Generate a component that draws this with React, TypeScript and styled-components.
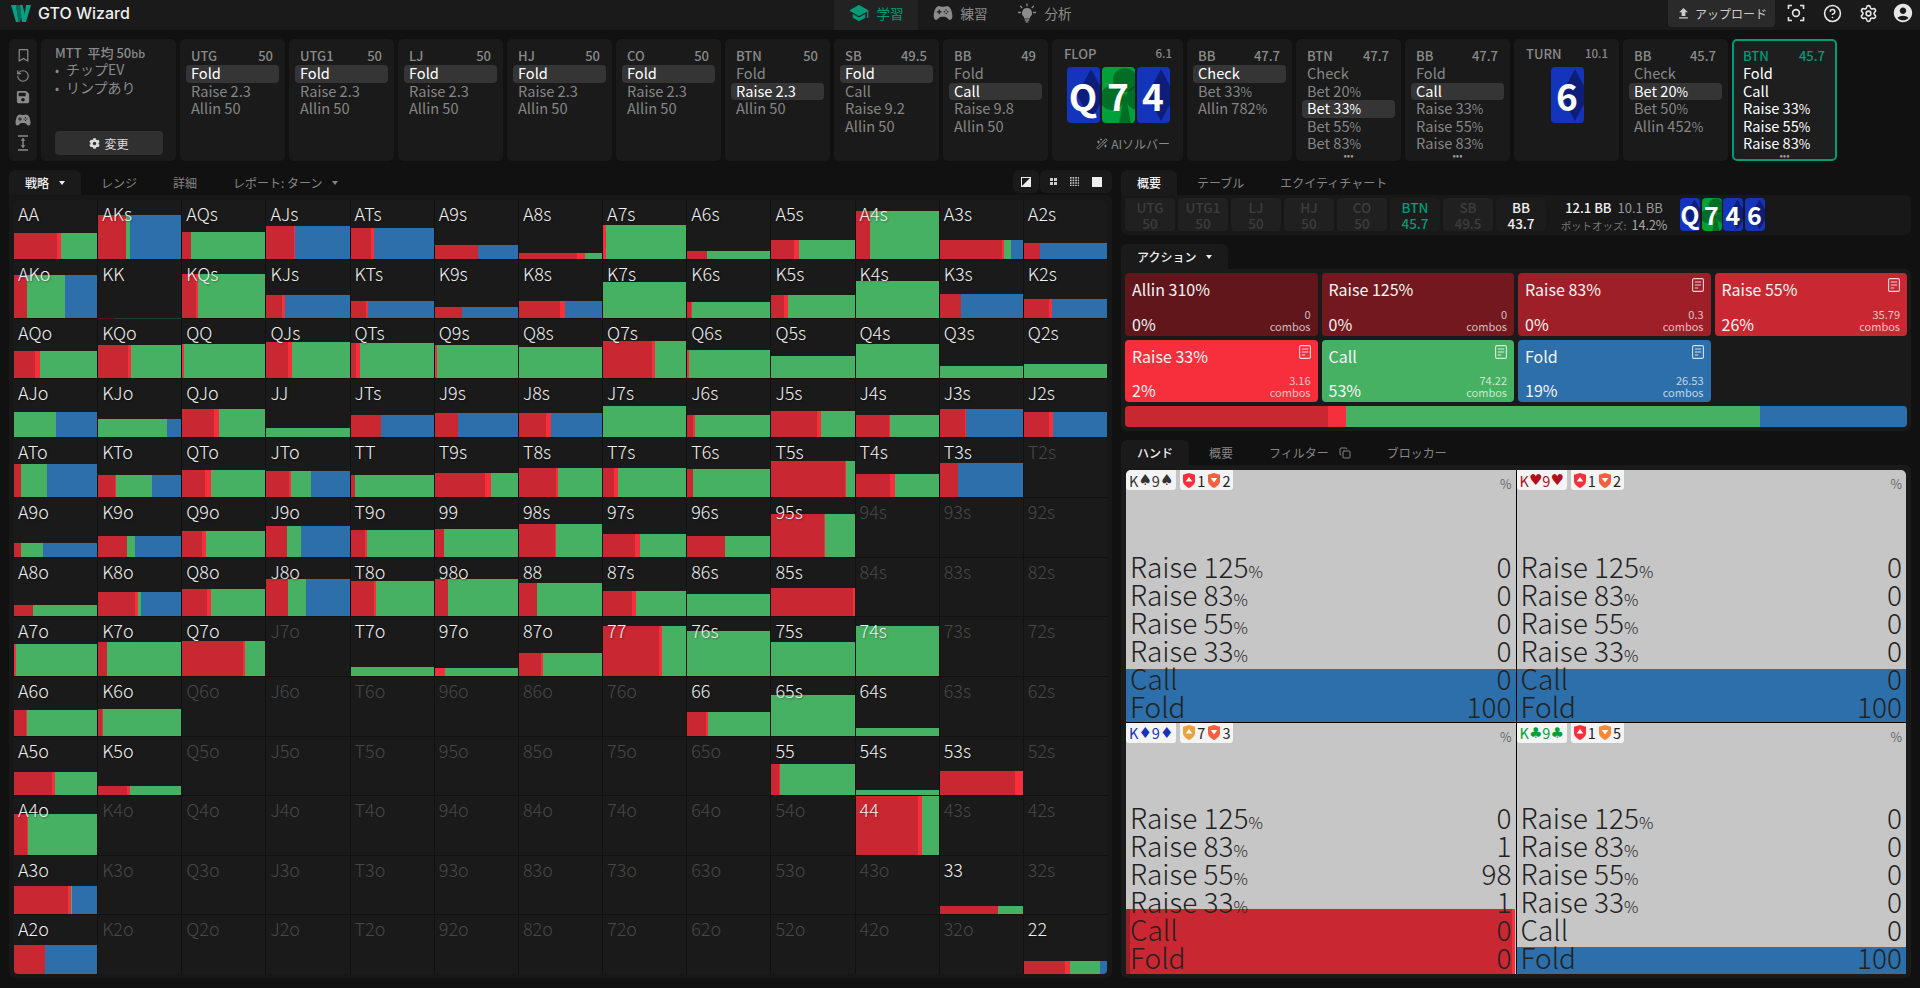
import React from "react";
import styled, { createGlobalStyle } from "styled-components";
import { FaCog, FaRegBookmark, FaSave } from "react-icons/fa";
import { IoGameController, IoSchool } from "react-icons/io5";
import { MdAccountCircle, MdFileUpload } from "react-icons/md";
import { CircleHelp, Copy, RotateCcw, Settings, WandSparkles } from "lucide-react";

const C = { r83: "#9e1f27", r55: "#c92832", r33: "#f72f3c", call: "#47b163", fold: "#2c6fab", teal: "#009b77" };

const Global = createGlobalStyle`
  html, body { margin: 0; padding: 0; background: #111; }
  body { font-family: "Noto Sans CJK JP", "Noto Sans", sans-serif; color: #fff; }
  * { box-sizing: border-box; }
`;

const Page = styled.div`
  width: 1920px; height: 988px; overflow: hidden; background: #111;
  display: flex; flex-direction: column;
`;
const Header = styled.header`
  height: 30px; background: #1a1a1a; display: flex; align-items: flex-start; flex: none;
`;
const Brand = styled.div`
  width: 834px; height: 25px; display: flex; align-items: center; gap: 7px; padding-left: 11px;
  font-family: Inter, sans-serif; font-weight: 500; font-size: 16px; color: #eee;
`;
const NavTab = styled.div<{ $on?: boolean }>`
  width: 84px; height: 30px; padding-bottom: 4px; display: flex; align-items: center; justify-content: center; gap: 8px;
  font-size: 13.5px; color: ${p => (p.$on ? C.teal : "#8c8c8c")}; background: ${p => (p.$on ? "#222" : "transparent")};
`;
const HeadRight = styled.div`
  margin-left: auto; display: flex; align-items: flex-start;
`;
const Upload = styled.div`
  width: 107px; height: 27px; background: #2a2a2a; border-radius: 0 0 4px 4px; color: #ccc; font-size: 12px;
  display: flex; align-items: center; justify-content: center; gap: 4px; margin-right: 3px;
`;
const HeadIcon = styled.div`
  width: 36px; height: 26px; display: flex; align-items: center; justify-content: center; color: #e6e6e6;
  &:last-child { width: 34px; }
`;
const Strip = styled.div`
  height: 122px; margin: 9px 0 9px 9px; display: flex; gap: 4px; flex: none;
`;
const SideBox = styled.div`
  width: 28px; background: #1a1a1a; border-radius: 5px; display: flex; flex-direction: column;
  align-items: center; justify-content: space-around; padding: 6px 0; color: #8a8a8a;
`;
const Mtt = styled.div`
  width: 135px; background: #1a1a1a; border-radius: 5px; padding: 6px 14px; display: flex; flex-direction: column;
`;
const MttTitle = styled.div`
  color: #8a8a8a; font-size: 13px; line-height: 16px; font-weight: 500; white-space: nowrap; small { font-size: 11px; }
`;
const MttLine = styled.div`
  color: #8a8a8a; font-size: 14px; line-height: 17.5px; white-space: nowrap; &:first-of-type { margin-top: 7px; }
  &::before { content: "•"; display: inline-block; width: 11px; font-size: 12px; }
`;
const ChangeBtn = styled.div`
  margin: auto 0 0; height: 24px; width: 108px; border-radius: 4px; background: #303030; color: #ddd; font-size: 12px;
  display: flex; align-items: center; justify-content: center; gap: 4px; margin-bottom: 0;
`;
const PosCard = styled.div<{ $on?: boolean }>`
  width: 105px; height: 122px; background: ${p => (p.$on ? "#1e1e1e" : "#1a1a1a")}; border-radius: 5px; flex: none;
  border: 2px solid ${p => (p.$on ? C.teal : "transparent")}; padding: 4px 4px 0; display: flex; flex-direction: column; position: relative;
`;
const PosHead = styled.div<{ $on?: boolean }>`
  display: flex; justify-content: space-between; padding: 0 6px 0 5px; height: 20px; align-items: center;
  font-size: 13px; font-weight: 500; color: ${p => (p.$on ? C.teal : "#8a8a8a")};
`;
const Opt = styled.div<{ $sel?: boolean; $on?: boolean }>`
  height: 17.6px; line-height: 16.6px; border-radius: 4px; padding-left: 5px; font-size: 14.6px; white-space: nowrap;
  color: ${p => (p.$sel || p.$on ? "#fff" : "#868686")}; background: ${p => (p.$sel ? "#353535" : "transparent")};
  small { font-size: 12.5px; }
`;
const More = styled.div`
  position: absolute; left: 0; right: 0; bottom: 0; text-align: center; font-size: 10px; line-height: 8px; color: #999; letter-spacing: 0;
`;
const StreetCard = styled.div<{ $w: number }>`
  width: ${p => p.$w}px; height: 122px; background: #1a1a1a; border-radius: 5px; flex: none; padding: 6px 11px 0 12px;
  display: flex; flex-direction: column;
`;
const StreetHead = styled.div`
  display: flex; justify-content: space-between; align-items: center; height: 16px; color: #8a8a8a; font-weight: 500; font-size: 13px;
  span:last-child { font-size: 11.5px; }
`;
const CardRow = styled.div`
  display: flex; justify-content: center; gap: 2px; margin-top: 6px;
`;
const BoardCard = styled.div<{ $c: string; $w: number; $h: number; $fs: number }>`
  display: grid; width: ${p => p.$w}px; height: ${p => p.$h}px; background: ${p => p.$c}; border-radius: 4px;
  font-size: ${p => p.$fs}px; font-weight: 700; color: #fff; flex: none;
  & > * { grid-area: 1 / 1; min-width: 0; min-height: 0; }
  svg { width: 100%; height: 100%; border-radius: 4px; }
  span { align-self: center; justify-self: center; line-height: 1; z-index: 1; }
`;
const AiLine = styled.div`
  margin-top: auto; margin-bottom: 9px; margin-right: 2px; display: flex; justify-content: flex-end; align-items: center; gap: 3px; color: #8a8a8a; font-size: 12px;
`;
const Main = styled.div`
  flex: 1; min-height: 0; display: flex; gap: 9px; padding: 0 9px 10px 9px;
`;
const LeftCol = styled.div`
  width: 1103px; display: flex; flex-direction: column; flex: none;
`;
const RightCol = styled.div`
  width: 790px; display: flex; flex-direction: column; flex: none; margin-left: 0; padding-left: 0;
`;
const TabBar = styled.div`
  height: 25px; display: flex; gap: 4px; flex: none; align-items: stretch;
`;
const Tab = styled.div<{ $on?: boolean }>`
  padding: 0 16px; display: flex; align-items: center; gap: 10px; font-size: 12px; white-space: nowrap;
  color: ${p => (p.$on ? "#f0f0f0" : "#858585")}; background: ${p => (p.$on ? "#1a1a1a" : "transparent")};
  border-radius: 6px 6px 0 0; font-weight: ${p => (p.$on ? 500 : 400)};
`;
const Caret = styled.i<{ $dim?: boolean }>`
  width: 0; height: 0; border-left: 3.5px solid transparent; border-right: 3.5px solid transparent;
  border-top: 4px solid ${p => (p.$dim ? "#858585" : "#eee")};
`;
const ViewTools = styled.div`
  margin-left: auto; display: flex; gap: 1px; height: 23px;
`;
const ToolGroup = styled.div<{ $w: number }>`
  width: ${p => p.$w}px; border-radius: 6px; background: #1a1a1a; display: flex; align-items: center; justify-content: space-around; padding: 0 3px;
`;
const GridPanel = styled.div`
  flex: 1; min-height: 0; background: #171717; border-radius: 0 6px 6px 6px; padding: 5px 5px 4px 5px;
`;
const RangeGrid = styled.div`
  height: 100%; display: grid; grid-template-columns: repeat(13, 1fr); grid-template-rows: repeat(13, 1fr); gap: 1px; background: #111;
  border-radius: 4px; overflow: hidden;
`;
const HandCell = styled.div`
  display: grid; background: #1a1a1a; min-height: 0; min-width: 0;
  & > * { grid-area: 1 / 1; }
`;
const HandLabel = styled.div<{ $dim: boolean }>`
  z-index: 1; padding: 0 0 0 4px; font-size: 18px; font-weight: 300; line-height: 26px; align-self: start;
  color: ${p => (p.$dim ? "#474747" : "#f0f0f0")}; text-shadow: ${p => (p.$dim ? "none" : "1px 1px 2px rgba(0,0,0,.35)")};
`;
const Bar = styled.div`
  display: flex; align-self: end;
`;
const Seg = styled.div<{ $c: string }>`
  background: ${p => p.$c}; height: 100%;
`;
const InfoPanel = styled.div`
  height: 40px; background: #181818; border-radius: 0 6px 6px 6px; padding: 3px 4px; display: flex; gap: 3px; flex: none;
`;
const Chip = styled.div<{ $kind: string }>`
  width: 50px; height: 33px; border-radius: 4px; text-align: center; font-size: 13.5px; line-height: 16px; padding-top: 1px; font-weight: 500;
  background: ${p => (p.$kind === "dim" ? "#202020" : "#1c1c1c")};
  color: ${p => (p.$kind === "dim" ? "#3d3d3d" : p.$kind === "teal" ? C.teal : "#eee")};
`;
const Pot = styled.div`
  margin-left: 11px; width: 108px; display: flex; flex-direction: column; align-items: center; flex: none;
`;
const PotTop = styled.div`
  font-size: 13px; line-height: 18px; margin-top: 1px; color: #eee; font-weight: 500; white-space: nowrap;
  em { font-style: normal; color: #999; margin-left: 6px; font-weight: 400; }
`;
const PotBottom = styled.div`
  font-size: 10.5px; line-height: 16px; color: #777; white-space: nowrap; b { font-weight: 400; font-size: 12.5px; color: #aaa; margin-left: 5px; }
`;
const MiniCards = styled.div`
  display: flex; gap: 1.5px; margin-left: 9px;
`;
const SectionGap = styled.div`
  height: 9px; flex: none;
`;
const ActionPanel = styled.div`
  height: 162px; flex: none; background: #1a1a1a; border-radius: 0 6px 6px 6px; padding: 4px;
  display: grid; grid-template-columns: repeat(4, 1fr); grid-template-rows: 63px 62px 21px; gap: 4px;
`;
const ActionCard = styled.div<{ $c: string }>`
  background: ${p => p.$c}; border-radius: 4px; padding: 5px 7px 2px; display: flex; flex-direction: column; justify-content: space-between; min-width: 0;
`;
const ActionTop = styled.div`
  display: flex; justify-content: space-between; font-size: 16px; line-height: 22px; color: #f4f4f4;
`;
const ActionBottom = styled.div`
  display: flex; justify-content: space-between; align-items: flex-end; font-size: 16px; line-height: 20px; color: #f4f4f4;
`;
const Combos = styled.div`
  text-align: right; font-size: 11px; line-height: 11.5px; color: rgba(255,255,255,.72); margin-bottom: 2px;
`;
const Mix = styled.div`
  grid-column: 1 / -1; display: flex; border-radius: 4px; overflow: hidden;
`;
const HandsPanel = styled.div`
  flex: 1; min-height: 0; background: #1a1a1a; border-radius: 0 6px 6px 6px; padding: 5px 5px 4px;
`;
const HandsGrid = styled.div`
  height: 100%; display: grid; grid-template-columns: 1fr 1fr; grid-template-rows: 1fr 1fr; gap: 1px; background: #000; border-radius: 5px 5px 0 0; overflow: hidden;
`;
const ComboRows = styled.div`
  margin-top: auto; margin-bottom: 2px;
`;
const ComboCell = styled.div`
  display: grid; background: #c6c6c6; min-height: 0; min-width: 0;
  & > * { grid-area: 1 / 1; }
  &:nth-child(n + 3) ${ComboRows} { margin-bottom: 3px; }
`;
const ComboBar = styled.div`
  align-self: end; display: flex;
`;
const ComboContent = styled.div`
  z-index: 1; display: flex; flex-direction: column; min-height: 0;
`;
const ComboHead = styled.div`
  display: flex; gap: 4px; align-items: flex-start; flex: none;
`;
const Pill = styled.div<{ $c?: string }>`
  height: 20px; display: flex; align-items: center; padding: 0 3px; background: #f4f4f4; border-radius: 0 0 3px 3px;
  font-size: 14.5px; color: ${p => p.$c ?? "#222"}; white-space: nowrap;
  span { font-family: "DejaVu Sans", sans-serif; font-size: 15px; }
  svg { flex: none; margin-right: 2px; }
  b { font-weight: 400; margin-right: 3px; }
  b:last-child { margin-right: 0; }
`;
const Pct = styled.div`
  margin-left: auto; font-size: 12.5px; color: #666; line-height: 16px; margin-top: 6px; padding-right: 4px;
`;
const ComboRow = styled.div`
  height: 28px; line-height: 28px; display: flex; justify-content: space-between; padding: 0 4px 0 4px; color: #222;
  font-size: 28px; font-weight: 300; small { font-size: 16px; }
`;

const Suit = ({ kind }: { kind: "d" | "c" }) =>
  kind === "d" ? (
    <svg viewBox="0 0 33 56" preserveAspectRatio="none">
      <polygon points="24,2 38,28 24,54 10,28" fill="rgba(0,0,30,.42)" />
    </svg>
  ) : (
    <svg viewBox="0 0 33 56" preserveAspectRatio="none">
      <g fill="rgba(0,40,10,.42)">
        <circle cx="23" cy="13" r="12" />
        <circle cx="10" cy="31" r="12" />
        <circle cx="36" cy="31" r="12" />
        <polygon points="23,25 29,56 17,56" />
      </g>
    </svg>
  );

const Logo = () => (
  <svg width="20" height="20" viewBox="0 0 20 20">
    <polygon points="0,2 5,2 8,19 5,19" fill="#00a383" />
    <polygon points="5,2 8.5,2 11,13 9,19 7.5,19" fill="#006f5c" />
    <polygon points="9,2 11.5,2 14.5,14 12.5,19 11,19" fill="#00a383" />
    <polygon points="15,2 20,2 15,19 12.5,19" fill="#00a383" />
  </svg>
);
const Bulb = () => (
  <svg width="20" height="20" viewBox="0 0 20 20" fill="currentColor">
    <path d="M10 5a5 5 0 0 0-3 9v1.5h6V14a5 5 0 0 0-3-9z" />
    <rect x="7.5" y="16.3" width="5" height="1.5" rx=".7" />
    <rect x="8.5" y="18.3" width="3" height="1.3" rx=".6" />
    <g stroke="currentColor" strokeWidth="1.3" strokeLinecap="round">
      <path d="M10 .8v2M3.5 3.2l1.3 1.3M16.5 3.2l-1.3 1.3M1.5 9.5h2M16.5 9.5h2" />
    </g>
  </svg>
);
const Scan = () => (
  <svg width="18" height="18" viewBox="0 0 18 18" fill="none" stroke="currentColor" strokeWidth="1.6">
    <path d="M1.5 5V1.5H5M13 1.5h3.5V5M16.5 13v3.5H13M5 16.5H1.5V13" />
    <circle cx="9" cy="9" r="3.4" />
  </svg>
);
const TextHeight = () => (
  <svg width="14" height="16" viewBox="0 0 14 16" stroke="currentColor" strokeWidth="1.4" fill="currentColor">
    <path d="M2 1h10M2 15h10M7 3.5v9" fill="none" />
    <path d="M5 5.5l2-2.2 2 2.2zM5 10.5l2 2.2 2-2.2z" strokeWidth=".4" />
  </svg>
);
const Note = () => (
  <svg width="12" height="14" viewBox="0 0 12 14" fill="none" stroke="rgba(255,255,255,.8)" strokeWidth="1.1">
    <rect x=".6" y=".6" width="10.8" height="12.8" rx="1.4" />
    <path d="M2.8 4h6.4M2.8 7h6.4M2.8 10h3.4" />
  </svg>
);
const Half = () => (
  <svg width="10" height="10" viewBox="0 0 10 10">
    <rect width="10" height="10" fill="#eee" />
    <polygon points="1,1 9,1 9,9" fill="#1a1a1a" transform="rotate(270 5 5)" />
  </svg>
);
const Dots = ({ n, s, g }: { n: number; s: number; g: number }) => (
  <svg width={n * s + (n - 1) * g} height={n * s + (n - 1) * g}>
    {Array.from({ length: n * n }).map((_, i) => (
      <rect key={i} x={(i % n) * (s + g)} y={Math.floor(i / n) * (s + g)} width={s} height={s} fill="#ccc" />
    ))}
  </svg>
);
const Shield = ({ c, up }: { c: string; up: boolean }) => (
  <svg width="12" height="15" viewBox="0 0 12 15">
    <path d="M6 0l6 1.8v6.2c0 3-3 5.6-6 7-3-1.4-6-4-6-7V1.8z" fill={c} />
    <polygon points={up ? "6,4 9.3,8.5 2.7,8.5" : "2.7,5 9.3,5 6,9.5"} fill="#fff" />
  </svg>
);

const PCT = (s: string) => {
  const m = s.match(/^(.*)%$/);
  return m ? (<>{m[1]}<small>%</small></>) : s;
};
const strip: { kind: string; name?: string; stack?: string; opts?: string[]; sel?: number; more?: boolean; on?: boolean; w?: number; cards?: [string, "d" | "c", string][]; ai?: boolean }[] = [
  { kind: "p", name: "UTG", stack: "50", opts: ["Fold", "Raise 2.3", "Allin 50"], sel: 0 },
  { kind: "p", name: "UTG1", stack: "50", opts: ["Fold", "Raise 2.3", "Allin 50"], sel: 0 },
  { kind: "p", name: "LJ", stack: "50", opts: ["Fold", "Raise 2.3", "Allin 50"], sel: 0 },
  { kind: "p", name: "HJ", stack: "50", opts: ["Fold", "Raise 2.3", "Allin 50"], sel: 0 },
  { kind: "p", name: "CO", stack: "50", opts: ["Fold", "Raise 2.3", "Allin 50"], sel: 0 },
  { kind: "p", name: "BTN", stack: "50", opts: ["Fold", "Raise 2.3", "Allin 50"], sel: 1 },
  { kind: "p", name: "SB", stack: "49.5", opts: ["Fold", "Call", "Raise 9.2", "Allin 50"], sel: 0 },
  { kind: "p", name: "BB", stack: "49", opts: ["Fold", "Call", "Raise 9.8", "Allin 50"], sel: 1 },
  { kind: "s", name: "FLOP", stack: "6.1", w: 131, ai: true, cards: [["Q", "d", "#1534bc"], ["7", "c", "#00a13a"], ["4", "d", "#1534bc"]] },
  { kind: "p", name: "BB", stack: "47.7", opts: ["Check", "Bet 33%", "Allin 782%"], sel: 0 },
  { kind: "p", name: "BTN", stack: "47.7", opts: ["Check", "Bet 20%", "Bet 33%", "Bet 55%", "Bet 83%"], sel: 2, more: true },
  { kind: "p", name: "BB", stack: "47.7", opts: ["Fold", "Call", "Raise 33%", "Raise 55%", "Raise 83%"], sel: 1, more: true },
  { kind: "s", name: "TURN", stack: "10.1", w: 105, cards: [["6", "d", "#1534bc"]] },
  { kind: "p", name: "BB", stack: "45.7", opts: ["Check", "Bet 20%", "Bet 50%", "Allin 452%"], sel: 1 },
  { kind: "p", name: "BTN", stack: "45.7", opts: ["Fold", "Call", "Raise 33%", "Raise 55%", "Raise 83%"], sel: -1, more: true, on: true },
];

// hand: [height %, raise55, raise33, call, fold]
const D: Record<string, number[]> = {
  AA: [44, 52, 4, 44, 0], AKs: [75, 34, 0, 4.5, 61.5], AQs: [46, 10.7, 0, 89.3, 0], AJs: [56, 33, 1, 0, 66], ATs: [53, 25, 3.4, 0, 71.6], A9s: [24, 52, 0, 0, 48], A8s: [10, 70, 9, 21, 0], A7s: [58, 0, 3, 97, 0], A6s: [13.5, 24, 0, 76, 0], A5s: [32, 27, 6.5, 66.5, 0], A4s: [82, 18, 0, 82, 0], A3s: [32, 75.5, 2, 8.5, 14], A2s: [27, 20, 0, 0, 80],
  AKo: [74, 16, 0, 45.5, 38.5], KK: [1, 20, 0, 80, 0], KQs: [76, 16, 3, 81, 0], KJs: [39, 19, 3.5, 0, 77.5], KTs: [30, 18, 3.5, 0, 78.5], K9s: [19, 33, 0, 0, 67], K8s: [30, 50, 5.6, 0, 44.4], K7s: [61, 0, 0, 100, 0], K6s: [27, 5, 1, 94, 0], K5s: [39, 15.5, 4, 80.5, 0], K4s: [63, 1, 0, 99, 0], K3s: [41, 26, 0, 0, 74], K2s: [32, 30, 4, 0, 66],
  AQo: [46, 25, 6.5, 68.5, 0], KQo: [56, 36, 4, 60, 0], QQ: [58, 0, 2, 98, 0], QJs: [61, 26, 5, 69, 0], QTs: [60, 7, 4.5, 88.5, 0], Q9s: [56, 0, 3, 97, 0], Q8s: [53, 0, 0, 100, 0], Q7s: [63, 59, 3, 38, 0], Q6s: [48, 0, 2, 98, 0], Q5s: [37.5, 0, 0, 100, 0], Q4s: [58, 0.5, 0, 99.5, 0], Q3s: [20, 0, 0, 100, 0], Q2s: [24, 0, 0, 100, 0],
  AJo: [43, 0, 0, 50.5, 49.5], KJo: [32, 0, 0, 83, 17], QJo: [49, 38, 6.5, 55.5, 0], JJ: [17, 0, 0, 100, 0], JTs: [37.5, 36, 0, 0, 64], J9s: [41, 28, 0, 0, 72], J8s: [41, 32, 6, 0, 62], J7s: [53, 0, 0, 100, 0], J6s: [37.5, 6.5, 2.5, 91, 0], J5s: [46, 55, 5, 40, 0], J4s: [37.5, 40, 1, 59, 0], J3s: [48, 31, 1, 0, 68], J2s: [43, 30, 4.5, 0, 65.5],
  ATo: [56, 8.5, 0, 31, 60.5], KTo: [37.5, 20.5, 1.5, 43, 35], QTo: [46, 27.5, 7, 65.5, 0], JTo: [44, 27.5, 2.5, 23, 47], TT: [37.5, 5, 0, 95, 0], T9s: [41, 61, 7, 32, 0], T8s: [49, 45, 2, 53, 0], T7s: [49, 13, 5.5, 81.5, 0], T6s: [48, 6.5, 1, 92.5, 0], T5s: [61, 88, 2, 10, 0], T4s: [39, 42, 5, 53, 0], T3s: [58, 21.5, 0, 0, 78.5],
  A9o: [24, 8.5, 0, 26, 65.5], K9o: [36, 35, 0, 9.5, 55.5], Q9o: [44, 24, 4, 72, 0], J9o: [53, 25, 0, 16, 59], T9o: [46, 17, 2.5, 80.5, 0], "99": [48, 11, 0, 89, 0], "98s": [56, 43, 1, 56, 0], "97s": [39, 38, 6.5, 55.5, 0], "96s": [36, 45, 1, 54, 0], "95s": [72, 63, 2, 35, 0],
  A8o: [20, 23, 0, 77, 0], K8o: [41, 44, 4, 4, 48], Q8o: [46, 30, 5, 65, 0], J8o: [63, 26, 0, 22, 52], T8o: [60, 28, 2, 70, 0], "98o": [63, 16.5, 0, 83.5, 0], "88": [56, 21.5, 0, 78.5, 0], "87s": [43, 35, 5, 60, 0], "86s": [37.5, 0, 0, 100, 0], "85s": [49, 98, 2, 0, 0],
  A7o: [55, 0, 3, 97, 0], K7o: [58, 11, 0, 89, 0], Q7o: [60, 73, 2.5, 24.5, 0], T7o: [15.5, 0, 0, 100, 0], "97o": [13.5, 0, 12, 88, 0], "87o": [39, 27, 2, 71, 0], "77": [85, 67, 3.5, 29.5, 0], "76s": [77, 0, 0, 100, 0], "75s": [58, 0, 0, 100, 0], "74s": [85, 0, 0, 100, 0],
  A6o: [43, 14, 1.5, 84.5, 0], K6o: [46, 5, 1, 94, 0], "66": [41, 23, 2, 75, 0], "65s": [70, 0, 0, 100, 0], "64s": [13.5, 0, 0, 100, 0],
  A5o: [39, 46, 3, 51, 0], K5o: [15.5, 35, 3, 62, 0], "55": [53, 9.5, 1, 89.5, 0], "54s": [8.5, 0, 0, 100, 0], "53s": [41, 90, 10, 0, 0],
  A4o: [70, 16, 1, 83, 0], "44": [100, 75, 5, 20, 0],
  A3o: [49, 65, 3, 2, 30], "33": [13.5, 70, 0, 30, 0],
  A2o: [49, 37, 0, 0, 63], "22": [22, 50, 5, 36, 9],
};
const R = "AKQJT98765432".split("");
const hands: string[] = [];
R.forEach((a, i) => R.forEach((b, j) => hands.push(i === j ? a + b : i < j ? a + b + "s" : b + a + "o")));
const SEG = [C.r55, C.r33, C.call, C.fold];

const actions = [
  { t: "Allin 310%", p: "0%", n: "0", c: "#61161c", note: false },
  { t: "Raise 125%", p: "0%", n: "0", c: "#72181e", note: false },
  { t: "Raise 83%", p: "0%", n: "0.3", c: C.r83, note: true },
  { t: "Raise 55%", p: "26%", n: "35.79", c: C.r55, note: true },
  { t: "Raise 33%", p: "2%", n: "3.16", c: C.r33, note: true },
  { t: "Call", p: "53%", n: "74.22", c: C.call, note: true },
  { t: "Fold", p: "19%", n: "26.53", c: C.fold, note: true },
];
const chips: [string, string, string][] = [
  ["UTG", "50", "dim"], ["UTG1", "50", "dim"], ["LJ", "50", "dim"], ["HJ", "50", "dim"], ["CO", "50", "dim"],
  ["BTN", "45.7", "teal"], ["SB", "49.5", "dim"], ["BB", "43.7", "on"],
];
const combos = [
  { r: "K", s: "♠", col: "#333", a: ["#f52f3c", "1"], b: ["#f3603f", "2"], h: 53, bar: [[100, C.fold]], v: ["0", "0", "0", "0", "0", "100"] },
  { r: "K", s: "♥", col: "#b00f1c", a: ["#f52f3c", "1"], b: ["#f3603f", "2"], h: 53, bar: [[100, C.fold]], v: ["0", "0", "0", "0", "0", "100"] },
  { r: "K", s: "♦", col: "#1533b8", a: ["#e8a33e", "7"], b: ["#f3603f", "3"], h: 65, bar: [[1, C.r83], [98, C.r55], [1, C.r33]], v: ["0", "1", "98", "1", "0", "0"] },
  { r: "K", s: "♣", col: "#00a03a", a: ["#f52f3c", "1"], b: ["#f58a3a", "5"], h: 27, bar: [[100, C.fold]], v: ["0", "0", "0", "0", "0", "100"] },
];
const rowNames = ["Raise 125%", "Raise 83%", "Raise 55%", "Raise 33%", "Call", "Fold"];
const miniCards: [string, "d" | "c", string][] = [["Q", "d", "#1534bc"], ["7", "c", "#00a13a"], ["4", "d", "#1534bc"], ["6", "d", "#1534bc"]];

export default function App() {
  return (
    <Page>
      <Global />
      <Header>
        <Brand><Logo />GTO Wizard</Brand>
        <NavTab $on><IoSchool size={20} />学習</NavTab>
        <NavTab><IoGameController size={20} />練習</NavTab>
        <NavTab><Bulb />分析</NavTab>
        <HeadRight>
          <Upload><MdFileUpload size={15} />アップロード</Upload>
          <HeadIcon><Scan /></HeadIcon>
          <HeadIcon><CircleHelp size={19} /></HeadIcon>
          <HeadIcon><Settings size={19} /></HeadIcon>
          <HeadIcon><MdAccountCircle size={22} /></HeadIcon>
        </HeadRight>
      </Header>
      <Strip>
        <SideBox>
          <FaRegBookmark size={13} />
          <RotateCcw size={14} />
          <FaSave size={14} />
          <IoGameController size={16} />
          <TextHeight />
        </SideBox>
        <Mtt>
          <MttTitle>MTT&nbsp; 平均 50<small>bb</small></MttTitle>
          <MttLine>チップEV</MttLine>
          <MttLine>リンプあり</MttLine>
          <ChangeBtn><FaCog size={11} />変更</ChangeBtn>
        </Mtt>
        {strip.map((s, i) =>
          s.kind === "p" ? (
            <PosCard key={i} $on={s.on}>
              <PosHead $on={s.on}><span>{s.name}</span><span>{s.stack}</span></PosHead>
              {s.opts!.map((o, k) => <Opt key={o} $sel={k === s.sel} $on={s.on}>{PCT(o)}</Opt>)}
              {s.more && <More>•••</More>}
            </PosCard>
          ) : (
            <StreetCard key={i} $w={s.w!}>
              <StreetHead><span>{s.name}</span><span>{s.stack}</span></StreetHead>
              <CardRow>
                {s.cards!.map(([r, k, c]) => (
                  <BoardCard key={r} $c={c} $w={33} $h={56} $fs={37}><Suit kind={k} /><span>{r}</span></BoardCard>
                ))}
              </CardRow>
              {s.ai && <AiLine><WandSparkles size={12} />AIソルバー</AiLine>}
            </StreetCard>
          )
        )}
      </Strip>
      <Main>
        <LeftCol>
          <TabBar>
            <Tab $on>戦略<Caret /></Tab>
            <Tab>レンジ</Tab>
            <Tab>詳細</Tab>
            <Tab>レポート: ターン<Caret $dim /></Tab>
            <ViewTools>
              <ToolGroup $w={26}><Half /></ToolGroup>
              <ToolGroup $w={72}><Dots n={2} s={3} g={1} /><Dots n={4} s={1.6} g={1} /><svg width="10" height="10"><rect width="10" height="10" fill="#eee" /></svg></ToolGroup>
            </ViewTools>
          </TabBar>
          <GridPanel>
            <RangeGrid>
              {hands.map(h => {
                const d = D[h];
                return (
                  <HandCell key={h}>
                    {d && (
                      <Bar style={{ height: `${d[0]}%`, opacity: d[0] < 2 ? 0.3 : 1 }}>
                        {d.slice(1).map((w, i) => w > 0 && <Seg key={i} $c={SEG[i]} style={{ width: `${w}%` }} />)}
                      </Bar>
                    )}
                    <HandLabel $dim={!d}>{h}</HandLabel>
                  </HandCell>
                );
              })}
            </RangeGrid>
          </GridPanel>
        </LeftCol>
        <RightCol>
          <TabBar>
            <Tab $on>概要</Tab>
            <Tab>テーブル</Tab>
            <Tab>エクイティチャート</Tab>
          </TabBar>
          <InfoPanel>
            {chips.map(([n, v, k]) => <Chip key={n} $kind={k}>{n}<br />{v}</Chip>)}
            <Pot>
              <PotTop>12.1 BB<em>10.1 BB</em></PotTop>
              <PotBottom>ポットオッズ:<b>14.2%</b></PotBottom>
            </Pot>
            <MiniCards>
              {miniCards.map(([r, k, c]) => (
                <BoardCard key={r} $c={c} $w={20} $h={33} $fs={25}><Suit kind={k} /><span>{r}</span></BoardCard>
              ))}
            </MiniCards>
          </InfoPanel>
          <SectionGap />
          <TabBar>
            <Tab $on>アクション<Caret /></Tab>
          </TabBar>
          <ActionPanel>
            {actions.map(a => (
              <ActionCard key={a.t} $c={a.c}>
                <ActionTop><span>{a.t}</span>{a.note && <Note />}</ActionTop>
                <ActionBottom><span>{a.p}</span><Combos>{a.n}<br />combos</Combos></ActionBottom>
              </ActionCard>
            ))}
            <Mix>
              {[[26, C.r55], [2.2, C.r33], [53, C.call], [18.8, C.fold]].map(([w, c]) => (
                <Seg key={c as string} $c={c as string} style={{ width: `${w}%` }} />
              ))}
            </Mix>
          </ActionPanel>
          <SectionGap />
          <TabBar>
            <Tab $on>ハンド</Tab>
            <Tab>概要</Tab>
            <Tab>フィルター<Copy size={12} /></Tab>
            <Tab>ブロッカー</Tab>
          </TabBar>
          <HandsPanel>
            <HandsGrid>
              {combos.map(c => (
                <ComboCell key={c.s}>
                  <ComboBar style={{ height: c.h }}>
                    {c.bar.map(([w, col]) => <Seg key={col as string} $c={col as string} style={{ width: `${w}%` }} />)}
                  </ComboBar>
                  <ComboContent>
                    <ComboHead>
                      <Pill $c={c.col}>{c.r}<span>{c.s}</span>9<span>{c.s}</span></Pill>
                      <Pill>
                        <Shield c={c.a[0]} up /><b>{c.a[1]}</b>
                        <Shield c={c.b[0]} up={false} /><b>{c.b[1]}</b>
                      </Pill>
                      <Pct>%</Pct>
                    </ComboHead>
                    <ComboRows>
                      {rowNames.map((n, i) => (
                        <ComboRow key={n}><span>{PCT(n)}</span><span>{c.v[i]}</span></ComboRow>
                      ))}
                    </ComboRows>
                  </ComboContent>
                </ComboCell>
              ))}
            </HandsGrid>
          </HandsPanel>
        </RightCol>
      </Main>
    </Page>
  );
}
